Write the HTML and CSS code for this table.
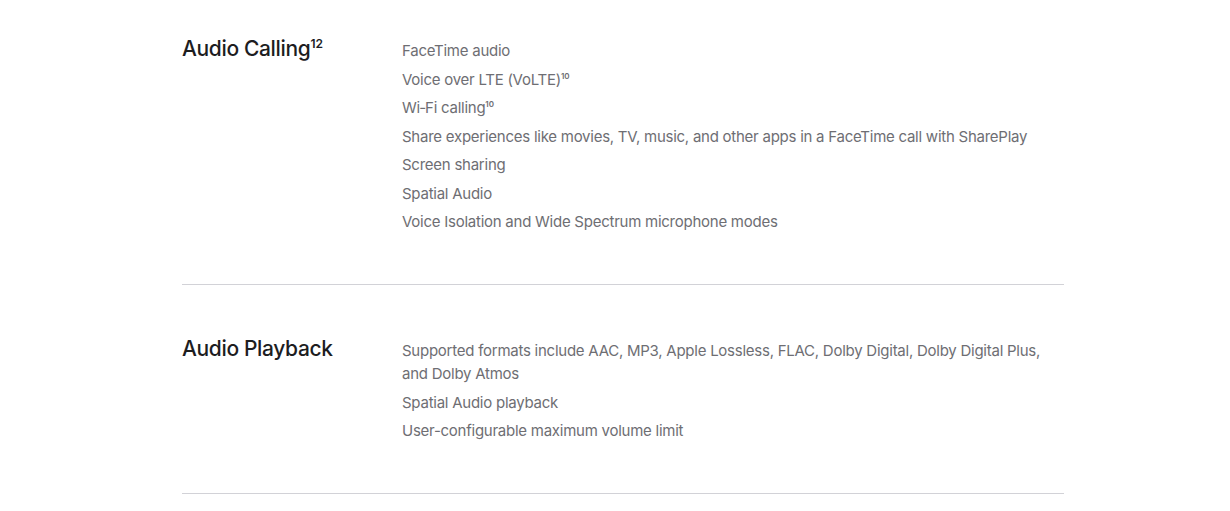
FILE: index.html
```html
<!DOCTYPE html>
<html lang="en">
<head>
<meta charset="utf-8">
<link rel="stylesheet" href="styles.css">
</head>
<body>
<main class="specs">
  <section class="row first">
    <h3 class="row-title">Audio Calling<sup class="fn-title">12</sup></h3>
    <ul class="items">
      <li>FaceTime audio</li>
      <li>Voice over LTE (VoLTE)<sup class="fn">10</sup></li>
      <li>Wi‑Fi calling<sup class="fn">10</sup></li>
      <li>Share experiences like movies, TV, music, and other apps in a FaceTime call with SharePlay</li>
      <li>Screen sharing</li>
      <li>Spatial Audio</li>
      <li>Voice Isolation and Wide Spectrum microphone modes</li>
    </ul>
  </section>
  <section class="row">
    <h3 class="row-title">Audio Playback</h3>
    <ul class="items">
      <li>Supported formats include AAC, MP3, Apple Lossless, FLAC, Dolby Digital, Dolby Digital Plus, and Dolby Atmos</li>
      <li>Spatial Audio playback</li>
      <li>User-configurable maximum volume limit</li>
    </ul>
  </section>
</main>
</body>
</html>
```
FILE: styles.css
```css
html, body {
  margin: 0;
  padding: 0;
  background: #fff;
}
body {
  font-family: Inter, "Liberation Sans", Arial, sans-serif;
  -webkit-font-smoothing: antialiased;
}
.specs {
  margin-left: 182px;
  width: 882px;
}
.row {
  display: grid;
  grid-template-columns: 220px 1fr;
  padding: 54px 0 51px;
  border-bottom: 1px solid #d2d2d7;
}
.row.first {
  padding-top: 39px;
}
.row-title {
  margin: -3px 0 0;
  font-size: 21px;
  line-height: 25px;
  font-weight: 500;
  color: #1d1d1f;
  letter-spacing: -0.35px;
}
.fn-title {
  font-size: 12px;
  line-height: 0;
  vertical-align: 8px;
  font-weight: 600;
  letter-spacing: 0;
}
.items {
  list-style: none;
  margin: 0;
  padding: 0;
  display: flex;
  flex-direction: column;
  gap: 5.5px;
}
.items li {
  font-size: 15px;
  line-height: 23px;
  color: #6e6e73;
  letter-spacing: -0.25px;
}
.fn {
  font-size: 8px;
  line-height: 0;
  vertical-align: 6px;
  font-weight: 600;
  letter-spacing: 0;
}
```
